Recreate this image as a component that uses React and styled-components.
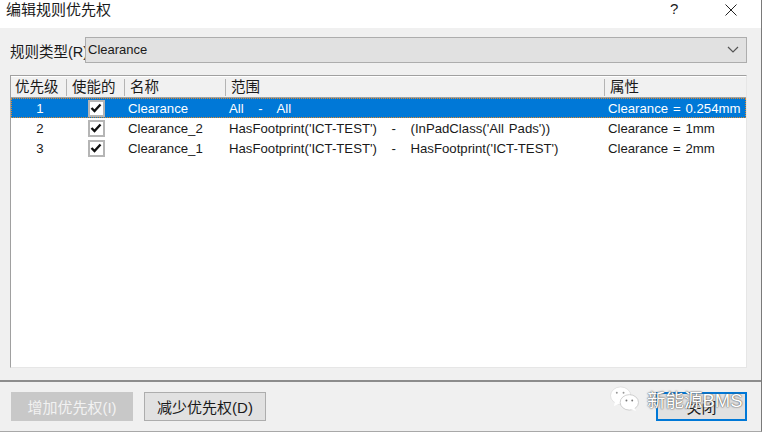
import React from 'react';
import styled, { createGlobalStyle } from 'styled-components';

const GlobalStyle = createGlobalStyle`
  html, body {
    margin: 0;
    background: #fff;
    font-family: "Liberation Sans", "Noto Sans CJK SC", sans-serif;
    color: #1a1a1a;
  }
`;

const Dialog = styled.div`
  width: 762px;
  height: 432px;
  box-sizing: border-box;
  display: flex;
  flex-direction: column;
  position: relative;
  border-right: 1px solid #7a7a7a;
  border-bottom: 1px solid #a8a8a8;
  background: #f0f0f0;
`;

const TitleBar = styled.div`
  height: 28px;
  flex: none;
  background: #fff;
  display: flex;
  align-items: center;
  padding: 0 0 0 6px;
  font-size: 15px;
`;

const Title = styled.div`
  flex: 1;
  margin-top: -12px;
`;

const Help = styled.div`
  width: 55px;
  margin-top: -11px;
  font-size: 15px;
`;

const Close = styled.div`
  width: 36px;
  margin-top: -9px;
  display: flex;
`;

const Body = styled.div`
  flex: 1;
  display: flex;
  flex-direction: column;
  padding: 9px 14px 0 10px;
`;

const TypeRow = styled.div`
  display: flex;
  align-items: center;
  height: 26px;
  font-size: 14.5px;
`;

const TypeLabel = styled.div`
  width: 75px;
  flex: none;
  overflow: hidden;
  white-space: nowrap;
`;

const Combo = styled.div`
  flex: 1;
  height: 26px;
  box-sizing: border-box;
  border: 1px solid #adadad;
  background: #e1e1e1;
  display: flex;
  align-items: center;
  justify-content: space-between;
  padding: 0 7px 2px 2px;
  font-size: 13px;
`;

const List = styled.div`
  margin-top: 12px;
  height: 293px;
  box-sizing: border-box;
  border: 1px solid #a0a0a0;
  border-right-color: #e6e6e6;
  border-bottom-color: #e6e6e6;
  background: #fff;
`;

const columns = '56px 58px 101px 379px 1fr';

const HeaderRow = styled.div`
  display: grid;
  grid-template-columns: ${columns};
  background: #f1f1f1;
  border-top: 1px solid #fff;
  border-bottom: 1px solid #a0a0a0;
  box-sizing: border-box;
  height: 22px;
  font-size: 14.5px;
`;

const HeaderCell = styled.div`
  padding-left: ${(p) => (p.$first ? '4px' : '5px')};
  height: 17px;
  margin: 2px 0;
  line-height: 17px;
  white-space: nowrap;
  overflow: hidden;
  border-right: ${(p) => (p.$last ? 'none' : '1px solid #b4b4b4')};
`;

const Row = styled.div`
  display: grid;
  grid-template-columns: ${columns};
  height: 20px;
  box-sizing: border-box;
  align-items: center;
  font-size: 13.2px;
  word-spacing: 1.2px;
  background: ${(p) => (p.$selected ? '#0078d7' : '#fff')};
  color: ${(p) => (p.$selected ? '#fff' : '#1a1a1a')};
  outline: ${(p) => (p.$selected ? '1px dotted #e08a2c' : 'none')};
  outline-offset: -1px;
`;

const NumCell = styled.div`
  text-align: center;
  padding-left: 2px;
`;

const CheckCell = styled.div`
  display: flex;
  justify-content: center;
`;

const CheckBox = styled.div`
  width: 17px;
  height: 17px;
  box-sizing: border-box;
  border: 2px solid #b5b5b5;
  background: #fff;
  display: flex;
  align-items: center;
  justify-content: center;
`;

const TextCell = styled.div`
  padding-left: 3px;
  white-space: pre;
`;

const Spacer = styled.div`
  flex: 1;
`;

const Footer = styled.div`
  flex: none;
  height: 51px;
  border-top: 2px solid #8c8c8c;
  margin-top: 12px;
  display: flex;
  align-items: flex-start;
  padding: 10px 14px 0 11px;
  gap: 11px;
`;

const Button = styled.div`
  width: 122px;
  height: 29px;
  box-sizing: border-box;
  border: 1px solid ${(p) => (p.$disabled ? '#c8c8c8' : '#adadad')};
  background: ${(p) => (p.$disabled ? '#c8c8c8' : '#e1e1e1')};
  color: ${(p) => (p.$disabled ? '#f2f2f2' : '#1a1a1a')};
  display: flex;
  align-items: center;
  justify-content: center;
  font-size: 15px;
`;

const CloseButton = styled(Button)`
  width: 91px;
  margin-left: auto;
  border: 2px solid #0078d7;
`;

const Watermark = styled.div`
  position: absolute;
  left: 610px;
  top: 386px;
  display: flex;
  align-items: center;
  gap: 7px;
  color: #fff;
  font-size: 18.5px;
  text-shadow: 0 0 2px #555, 0 0 1px #555;
  white-space: nowrap;
`;

const rules = [
  { id: 1, name: 'Clearance', scope: 'All   -   All', attr: 'Clearance = 0.254mm', selected: true },
  { id: 2, name: 'Clearance_2', scope: "HasFootprint('ICT-TEST')   -   (InPadClass('All Pads'))", attr: 'Clearance = 1mm' },
  { id: 3, name: 'Clearance_1', scope: "HasFootprint('ICT-TEST')   -   HasFootprint('ICT-TEST')", attr: 'Clearance = 2mm' },
];

function App() {
  return (
    <Dialog>
      <GlobalStyle />
      <TitleBar>
        <Title>编辑规则优先权</Title>
        <Help>?</Help>
        <Close>
          <svg width="12" height="12" viewBox="0 0 12 12">
            <path d="M0.5 0.5L11.5 11.5M11.5 0.5L0.5 11.5" stroke="#222" strokeWidth="1" fill="none" />
          </svg>
        </Close>
      </TitleBar>
      <Body>
        <TypeRow>
          <TypeLabel>规则类型(R)</TypeLabel>
          <Combo>
            Clearance
            <svg width="12" height="7" viewBox="0 0 12 7">
              <path d="M1 1L6 6L11 1" stroke="#555" strokeWidth="1.2" fill="none" />
            </svg>
          </Combo>
        </TypeRow>
        <List>
          <HeaderRow>
            <HeaderCell $first>优先级</HeaderCell>
            <HeaderCell>使能的</HeaderCell>
            <HeaderCell>名称</HeaderCell>
            <HeaderCell>范围</HeaderCell>
            <HeaderCell $last>属性</HeaderCell>
          </HeaderRow>
          {rules.map((r) => (
            <Row key={r.id} $selected={r.selected}>
              <NumCell>{r.id}</NumCell>
              <CheckCell>
                <CheckBox>
                  <svg width="12" height="10" viewBox="0 0 12 10">
                    <path d="M1.5 5L4.5 8L10.5 1.5" stroke="#111" strokeWidth="2.4" fill="none" />
                  </svg>
                </CheckBox>
              </CheckCell>
              <TextCell>{r.name}</TextCell>
              <TextCell>{r.scope}</TextCell>
              <TextCell>{r.attr}</TextCell>
            </Row>
          ))}
        </List>
        <Spacer />
      </Body>
      <Footer>
        <Button $disabled>增加优先权(I)</Button>
        <Button>减少优先权(D)</Button>
        <CloseButton>关闭</CloseButton>
      </Footer>
      <Watermark>
        <svg width="30" height="26" viewBox="0 0 31 27">
          <ellipse cx="11" cy="10" rx="10.5" ry="9" fill="#fff" stroke="#ccc" strokeWidth="0.5" />
          <path d="M5 16L4 21L10 18Z" fill="#fff" />
          <ellipse cx="20" cy="17" rx="9.5" ry="8" fill="#fff" stroke="#bbb" strokeWidth="0.7" />
          <path d="M25 22L27 26L21 24Z" fill="#fff" />
          <circle cx="7" cy="7" r="1" fill="#999" />
          <circle cx="14" cy="7" r="1" fill="#999" />
          <circle cx="17" cy="15" r="1" fill="#777" />
          <circle cx="23" cy="15" r="1" fill="#777" />
        </svg>
        新能源BMS
      </Watermark>
    </Dialog>
  );
}

export default App;
